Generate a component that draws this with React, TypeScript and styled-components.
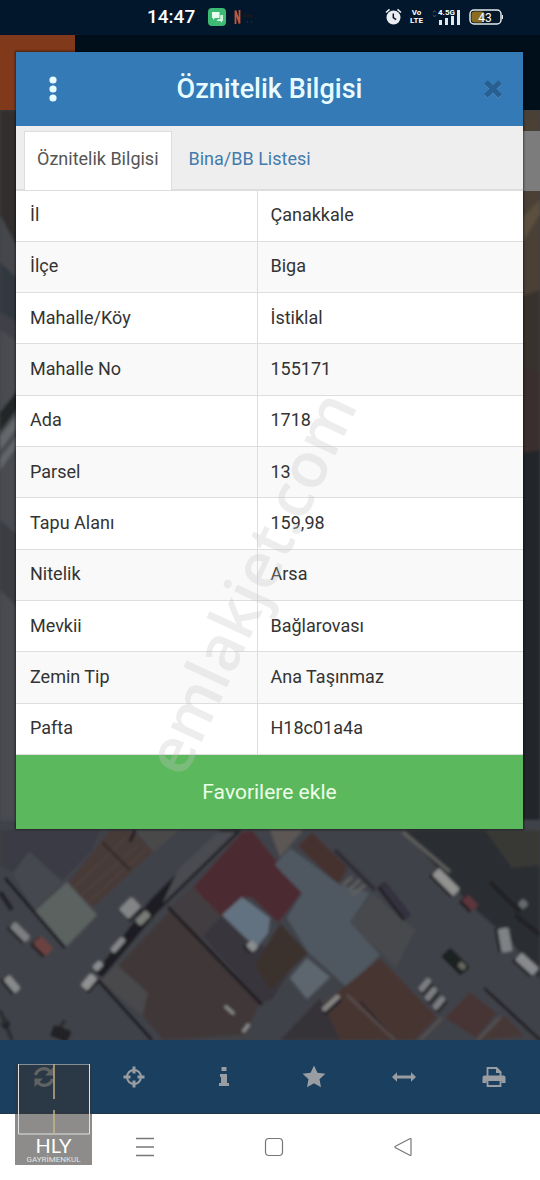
import React from "react";
import styled, { createGlobalStyle } from "styled-components";

const GlobalStyle = createGlobalStyle`
  *, *::before, *::after { box-sizing: border-box; }
  body {
    margin: 0;
    background: #fff;
    font-family: Roboto, "Liberation Sans", sans-serif;
    color: #333;
  }
  button { font: inherit; border: 0; padding: 0; background: none; cursor: pointer; }
`;

const Page = styled.div`
  display: flex;
  flex-direction: column;
  min-height: 100vh;
`;

/* ---------- status bar ---------- */

const StatusBar = styled.header`
  display: flex;
  align-items: center;
  justify-content: space-between;
  height: 35px;
  padding: 0 37px 2px 147px;
  background: #02172b;
  color: #fff;
`;

const StatusGroup = styled.div<{ $gap: number }>`
  display: flex;
  align-items: center;
  gap: ${(p) => p.$gap}px;
`;

const Clock = styled.time`
  margin-right: 5px;
  font-size: 19px;
  line-height: 24px;
  font-weight: 500;
`;

const VoLte = styled.span`
  font-size: 8px;
  line-height: 8px;
  font-weight: 700;
  text-align: center;
`;

/* ---------- app area ---------- */

const Stage = styled.main`
  display: grid;
  flex: 1;
  grid-template-columns: minmax(0, 1fr);
  background: #3d3d41;
`;

const Backdrop = styled.div`
  display: flex;
  flex-direction: column;
  grid-area: 1 / 1;
  min-height: 0;
`;

const AppBar = styled.div`
  height: 75px;
  background: #010f1a;
`;

const AppBarAccent = styled.div`
  width: 75px;
  height: 100%;
  background: #80391b;
`;

const MapBox = styled.div`
  position: relative;
  flex: 1;
  overflow: hidden;
`;

const MapDrawing = styled.svg`
  position: absolute;
  inset: 0;
  width: 100%;
  height: 100%;
`;

const MapControl = styled.div`
  position: absolute;
  top: 21px;
  right: 0;
  width: 60px;
  height: 60px;
  background: #7c7c7c;
`;

const Dialog = styled.section`
  position: relative;
  grid-area: 1 / 1;
  align-self: start;
  margin: 17px 17px 211px 16px;
  background: #fff;
  box-shadow: 0 0 2px 1px rgba(0, 0, 0, 0.45);
`;

const DialogHeader = styled.div`
  display: grid;
  grid-template-columns: 74px 1fr 74px;
  align-items: center;
  height: 74px;
  background: #337ab7;
`;

const Title = styled.h1`
  margin: 0;
  font-size: 27px;
  line-height: 32px;
  font-weight: 500;
  text-align: center;
  color: #e8fcff;
`;

const HeaderButton = styled.button<{ $end?: boolean }>`
  display: flex;
  align-items: center;
  justify-content: ${(p) => (p.$end ? "flex-end" : "center")};
  height: 74px;
  padding-right: ${(p) => (p.$end ? 20 : 0)}px;
`;

const Tabs = styled.div`
  display: flex;
  align-items: flex-end;
  height: 65px;
  padding: 5px 8px 0;
  background: #eee;
  border-bottom: 2px solid #ddd;
`;

const Tab = styled.button<{ $active?: boolean }>`
  height: 59px;
  padding: 0 12px 4px;
  margin-bottom: -1px;
  margin-right: 4px;
  border: 1px solid ${(p) => (p.$active ? "#ddd" : "transparent")};
  border-bottom: 0;
  background: ${(p) => (p.$active ? "#fff" : "transparent")};
  color: ${(p) => (p.$active ? "#555" : "#427bac")};
  font-size: 18px;
  line-height: 24px;
  white-space: nowrap;
`;

const Table = styled.table`
  width: 100%;
  height: 564px;
  table-layout: fixed;
  border-collapse: collapse;
  font-size: 18px;
  line-height: 24px;
`;

const Row = styled.tr`
  border-bottom: 1px solid #ddd;
  &:nth-child(even) { background: #f9f9f9; }
`;

const Name = styled.th`
  width: 241px;
  padding: 0 14px 1px;
  border-right: 1px solid #ddd;
  font-weight: 400;
  text-align: left;
`;

const Value = styled.td`
  padding: 0 13px 1px;
`;

const FavoriteButton = styled.button`
  display: block;
  width: 100%;
  height: 74px;
  background: #5cb85c;
  color: #ecffe8;
  font-size: 21px;
  line-height: 28px;
`;

const Watermark = styled.div`
  position: absolute;
  top: 530px;
  left: 233px;
  color: rgba(195, 195, 195, 0.3);
  font-family: "Open Sans", "Liberation Sans", sans-serif;
  font-size: 63px;
  line-height: 1;
  font-weight: 600;
  white-space: nowrap;
  transform: translate(-50%, -50%) rotate(-65deg);
  pointer-events: none;
`;

/* ---------- bottom bars ---------- */

const Bottom = styled.footer`
  position: relative;
`;

const Toolbar = styled.nav`
  display: grid;
  grid-template-columns: repeat(6, 1fr);
  height: 74px;
  background: #1b3f5f;
  border-bottom: 1px solid #24384a;
`;

const ToolButton = styled.button`
  display: flex;
  align-items: center;
  justify-content: center;
  padding-right: 3px;
  color: #9a9ea3;
`;

const SystemNav = styled.nav`
  display: flex;
  align-items: center;
  justify-content: space-between;
  height: 66px;
  padding: 0 122px 0 133px;
  background: #fff;
`;

const Agency = styled.div`
  position: absolute;
  top: 24px;
  left: 15px;
  display: flex;
  flex-direction: column;
  align-items: center;
  width: 77px;
  height: 101px;
  background: rgba(55, 52, 50, 0.57);
  color: #fff;
`;

const AgencyName = styled.span`
  font-family: Lato, sans-serif;
  font-size: 20px;
  line-height: 20px;
  font-weight: 400;
`;

const AgencyKind = styled.span`
  margin-top: 1px;
  font-size: 8px;
  line-height: 8px;
  color: #e4e4e4;
`;

/* ---------- drawings ---------- */

const AlarmIcon = () => (
  <svg width="17" height="17" viewBox="0 0 17 17" aria-hidden="true">
    <circle cx="8.5" cy="9.5" r="7" fill="#e9edf2" />
    <path d="M1 4.5 4.5 1.3M16 4.5 12.5 1.3" stroke="#e9edf2" strokeWidth="1.6" />
    <path d="M8.3 5.5v4.2l2.8 2" stroke="#02172b" strokeWidth="1.5" fill="none" />
  </svg>
);

const SignalIcon = () => (
  <svg width="30" height="18" viewBox="0 0 30 18" aria-hidden="true">
    <path d="M2 4.5 3.5 2.5 5 4.5M2 7 3.5 9 5 7" stroke="#44515f" fill="none" />
    <g fill="#e4e8ec">
      <rect x="8" y="12" width="3" height="5" />
      <rect x="14" y="10" width="3" height="7" />
      <rect x="20" y="8" width="3" height="9" />
      <rect x="26" y="2" width="3" height="15" />
    </g>
    <text x="7" y="7" fill="#fff" fontSize="8" fontWeight="700" fontFamily="Roboto, sans-serif">4.5G</text>
  </svg>
);

const BatteryIcon = () => (
  <svg width="34" height="16" viewBox="0 0 34 16" role="img" aria-label="43%">
    <rect x="2.5" y="2.5" width="13" height="11" rx="3" fill="#8c6d20" />
    <rect x="1" y="1" width="31" height="14" rx="4" fill="none" stroke="#e4e8ec" strokeWidth="1.5" />
    <path d="M33.4 6v4" stroke="#e4e8ec" strokeWidth="1.2" />
    <text x="16" y="12.5" textAnchor="middle" fill="#fff" fontSize="12" fontFamily="Roboto, sans-serif">43</text>
  </svg>
);

const ChatIcon = () => (
  <svg width="18" height="18" viewBox="0 0 18 18" aria-hidden="true">
    <rect width="18" height="18" rx="4" fill="#3dba74" />
    <path d="M4 4h7.5v6H7l-2 2v-2H4z" fill="#e8fff0" />
    <path d="M12.3 7H15v6h-1v1.8L12 13H8.5l1.7-2h2.1z" fill="#d2f7df" />
  </svg>
);

const LetterMark = () => (
  <svg width="20" height="16" viewBox="0 0 20 16" aria-hidden="true">
    <path d="M1.5 15V1.5L5.5 14.5V1" fill="none" stroke="#c4583c" strokeWidth="1.8" />
    <path d="M9 7h10" stroke="#161821" strokeWidth="3" />
    <path d="M13 13h1M17 13h1" stroke="#31465a" />
  </svg>
);

const DotsIcon = () => (
  <svg width="8" height="26" viewBox="0 0 8 26" aria-hidden="true" fill="#e8fcff">
    <circle cx="4" cy="4" r="3.6" /><circle cx="4" cy="13" r="3.6" /><circle cx="4" cy="22" r="3.6" />
  </svg>
);

const CloseIcon = () => (
  <svg width="20" height="20" viewBox="0 0 20 20" aria-hidden="true">
    <path d="M3 4 17 18M17 4 3 18" stroke="#4f8bbf" strokeWidth="5" />
    <path d="M3 3 17 17M17 3 3 17" stroke="#285f90" strokeWidth="5" />
  </svg>
);

const ToolIcon = ({ children }: { children: React.ReactNode }) => (
  <svg width="24" height="24" viewBox="0 0 24 24" aria-hidden="true" fill="currentColor">
    {children}
  </svg>
);

const RefreshIcon = () => (
  <ToolIcon>
    <path d="M3.5 10A8.5 8.5 0 0 1 18 6.5M20.5 14A8.5 8.5 0 0 1 6 17.5" fill="none" stroke="currentColor" strokeWidth="3.2" />
    <path d="M21.5 2v8.5H13zM2.5 22v-8.5H11z" />
  </ToolIcon>
);

const CrosshairIcon = () => (
  <ToolIcon>
    <circle cx="12" cy="12" r="7" fill="none" stroke="currentColor" strokeWidth="2" />
    <path d="M12 1.5v7M12 15.5v7M1.5 12h7M15.5 12h7" stroke="currentColor" strokeWidth="3" />
  </ToolIcon>
);

const InfoIcon = () => (
  <ToolIcon>
    <path d="M9.5 2h5v4h-5zM8 9h7v9h2v3H7v-3h2v-6H8z" />
  </ToolIcon>
);

const StarIcon = () => (
  <ToolIcon>
    <path d="m12 .5 3.4 7.3 8 1-5.9 5.5 1.5 7.9-7-3.9-7 3.9 1.5-7.9L.6 8.8l8-1z" />
  </ToolIcon>
);

const ResizeIcon = () => (
  <ToolIcon>
    <path d="M0 12 5 7.2v3.3h14V7.2L24 12l-5 4.8v-3.3H5v3.3z" />
  </ToolIcon>
);

const PrintIcon = () => (
  <ToolIcon>
    <path d="M5.5 12V3h9l4 4v5" fill="none" stroke="currentColor" strokeWidth="1.8" />
    <path d="M14 2.5h1L19.5 7v1H14z" />
    <path d="M2.5 10.5h19a2 2 0 0 1 2 2V18h-4v-2h-15v2h-4v-5.5a2 2 0 0 1 2-2z" />
    <path d="M5.5 16v5h13v-5" fill="none" stroke="currentColor" strokeWidth="1.8" />
  </ToolIcon>
);

const MenuLines = () => (
  <svg width="24" height="24" viewBox="0 0 24 24" aria-hidden="true">
    <path d="M3 3.5h18M3 12h18M3 20.5h18" stroke="#777" strokeWidth="1.3" />
  </svg>
);

const HomeSquare = () => (
  <svg width="24" height="24" viewBox="0 0 24 24" aria-hidden="true">
    <rect x="3.5" y="3.5" width="17" height="17" rx="3.5" fill="none" stroke="#777" strokeWidth="1.2" />
  </svg>
);

const BackTriangle = () => (
  <svg width="24" height="24" viewBox="0 0 24 24" aria-hidden="true">
    <path d="M20 4.3v15.4q0 1.2-1.2.6L4.5 12.8q-1.2-.8 0-1.6L18.8 3.7q1.2-.6 1.2.6z" fill="none" stroke="#777" strokeWidth="1.2" />
  </svg>
);

const LogoFrame = () => (
  <svg width="77" height="71" viewBox="0 0 77 71" aria-hidden="true">
    <path d="M3.5 0v70h71V0z" fill="none" stroke="#dfe2e4" strokeWidth="1" />
    <path d="M39 0v35M39 46v24" stroke="#cbb787" strokeWidth="1.4" />
  </svg>
);

const shapes: [string, string][] = [
  /* left edge */
  ["#302f2d", "0,110 30,110 30,255 0,240"],
  ["#45474b", "0,215 30,270 30,330 0,300"],
  ["#303741", "0,262 30,290 30,330 0,312"],
  ["#484c51", "0,330 30,350 30,860 0,860"],
  ["#232528", "0,412 30,375 30,392 0,432"],
  ["#65686a", "0,436 30,400 30,412 0,450"],
  ["#62666a", "0,458 30,420 30,428 0,470"],
  ["#3b3e43", "0,520 30,545 30,620 0,590"],
  /* right edge */
  ["#4b4036", "510,110 540,110 540,300 510,330"],
  ["#5c503f", "510,230 540,200 540,214 510,262"],
  ["#37332f", "510,300 540,290 540,375 510,360"],
  ["#3a2d2d", "510,360 540,372 540,480 510,470"],
  ["#20262a", "510,455 540,450 540,830 510,830"],
  /* streets and blocks below the dialog */
  ["#41434a", "0,820 540,820 540,1040 0,1040"],
  ["#3b3b45", "0,830 100,830 92,850 62,880 28,852 13,873 0,865"],
  ["#45494f", "13,873 30,852 62,882 34,910"],
  ["#463a38", "68,883 110,830 133,830 153,852 93,908"],
  ["#4a4848", "135,830 178,830 154,852"],
  ["#5c6261", "33,913 67,882 97,915 65,948"],
  ["#1f1c22", "220,830 242,830 156,914 102,978 96,972 150,900"],
  ["#4b2c32", "242,832 252,830 302,893 278,923 250,896 220,917 193,887"],
  ["#433c40", "170,906 193,887 220,915 200,937"],
  ["#38353c", "202,936 222,915 260,945 300,955 272,1000 262,1003"],
  ["#403737", "170,910 200,937 260,1003 245,1035 163,1040 143,1017 147,993 117,967"],
  ["#49484b", "100,980 117,965 148,993 142,1015"],
  ["#647280", "222,915 242,897 270,918 268,933 256,948"],
  ["#5b5755", "270,830 303,830 280,857"],
  ["#44302f", "298,846 312,832 348,868 338,885"],
  ["#505961", "290,848 340,885 370,893 350,922 380,955 347,987 308,952 287,918 302,893 275,865"],
  ["#47494d", "350,922 372,894 415,930 396,967"],
  ["#3b322f", "280,923 308,953 270,990 255,965"],
  ["#5d666e", "290,978 307,958 330,977 307,999"],
  ["#463433", "380,958 437,1017 415,1040 330,1040 308,1016"],
  ["#363237", "280,1040 320,998 340,1040"],
  ["#463635", "445,1018 470,992 497,1013 476,1038"],
  ["#473837", "480,1040 505,1015 525,1036"],
  ["#2b2f31", "402,830 540,830 540,980 510,940 470,905 430,860"],
  ["#383736", "485,830 540,830 540,865 512,868"],
  ["#4a4b51", "178,870 218,832 236,832 162,904"],
];

const strokes: [string, number, string][] = [
  ["#19181c", 3, "M5 878 65 948M98 980 152 1040M168 907 262 1005"],
  ["#1d1a1e", 3, "M484 988 540 1040M130 842 135 830"],
  ["#5b4a45", 1, "M75 887 125 838M82 895 137 846M88 902 146 850"],
  ["#2c2225", 2, "M102 842 130 870M360 1002 395 1040"],
  ["#5c5350", 2, "M347 995 395 1040M420 1040 442 1018M478 1040 500 1017"],
  ["#61615f", 3, "M403 832 450 872M343 885 352 877M349 890 360 880M352 895 365 885"],
  ["#2c2b30", 4, "M0 1010 12 1040M55 1036 65 1020M335 850 375 890"],
  ["#8d9092", 3, "M225 1006 234 1014M243 1032 249 1024"],
  ["#222426", 5, "M0 892 12 910M490 882 520 912M515 915 540 935"],
];

/* x, y, length, width, angle, colour */
const cars: [number, number, number, number, number, string][] = [
  [20, 932, 22, 8, 45, "#7d7e82"], [43, 946, 18, 11, 45, "#6c4340"], [12, 984, 18, 8, 50, "#88898a"],
  [130, 908, 18, 14, -45, "#838486"], [143, 918, 15, 8, -45, "#787b77"], [118, 945, 18, 6, -48, "#85878a"],
  [98, 966, 10, 7, -45, "#8b8d90"], [89, 982, 16, 9, -50, "#909193"], [396, 901, 42, 8, 52, "#35333f"],
  [446, 882, 30, 10, 45, "#929291"], [470, 903, 15, 9, 45, "#5d363c"], [505, 940, 24, 11, 80, "#7f8284"],
  [527, 964, 24, 10, 42, "#888a8d"], [457, 961, 27, 10, 45, "#1f2024"], [462, 966, 8, 6, 45, "#65675f"],
  [425, 985, 15, 6, -50, "#7c7e81"], [431, 994, 15, 6, -50, "#7c7e81"], [439, 1003, 15, 6, -50, "#7c7e81"],
  [331, 1003, 22, 5, -42, "#858483"], [252, 946, 10, 8, 45, "#8a8d8e"], [523, 904, 8, 8, 45, "#666a6d"],
  [5, 1022, 8, 5, -40, "#2b2d30"], [62, 1032, 18, 9, 20, "#242428"],
];

const AerialMap = () => (
  <MapDrawing viewBox="0 110 540 930" preserveAspectRatio="xMidYMax slice" aria-hidden="true">
    <defs>
      <filter id="soft" x="0" y="0" width="100%" height="100%">
        <feGaussianBlur stdDeviation="1.5" />
      </filter>
    </defs>
    <rect x="0" y="110" width="540" height="930" fill="#404147" />
    <g filter="url(#soft)">
      {shapes.map(([fill, points]) => <polygon key={points} fill={fill} points={points} />)}
      {strokes.map(([stroke, width, d]) => (
        <path key={d} d={d} fill="none" stroke={stroke} strokeWidth={width} />
      ))}
      {cars.map(([x, y, length, width, angle, fill]) => (
        <g key={`${x}-${y}`} transform={`translate(${x} ${y}) rotate(${angle})`}>
          <rect x={-length / 2 - 1} y={-width / 2 + 1} width={length} height={width + 2} fill="#1c1d20" />
          <rect x={-length / 2} y={-width / 2} width={length} height={width} rx="2" fill={fill} />
        </g>
      ))}
    </g>
  </MapDrawing>
);

/* ---------- data ---------- */

const attributes = [
  ["İl", "Çanakkale"],
  ["İlçe", "Biga"],
  ["Mahalle/Köy", "İstiklal"],
  ["Mahalle No", "155171"],
  ["Ada", "1718"],
  ["Parsel", "13"],
  ["Tapu Alanı", "159,98"],
  ["Nitelik", "Arsa"],
  ["Mevkii", "Bağlarovası"],
  ["Zemin Tip", "Ana Taşınmaz"],
  ["Pafta", "H18c01a4a"],
];

const tools = [
  { label: "Yenile", Icon: RefreshIcon },
  { label: "Konum", Icon: CrosshairIcon },
  { label: "Bilgi", Icon: InfoIcon },
  { label: "Favoriler", Icon: StarIcon },
  { label: "Ölç", Icon: ResizeIcon },
  { label: "Yazdır", Icon: PrintIcon },
];

export default function App() {
  return (
    <Page>
      <GlobalStyle />
      <StatusBar>
        <StatusGroup $gap={8}>
          <Clock>14:47</Clock>
          <ChatIcon />
          <LetterMark />
        </StatusGroup>
        <StatusGroup $gap={8}>
          <AlarmIcon />
          <VoLte>Vo<br />LTE</VoLte>
          <SignalIcon />
          <BatteryIcon />
        </StatusGroup>
      </StatusBar>

      <Stage>
        <Backdrop>
          <AppBar><AppBarAccent /></AppBar>
          <MapBox>
            <AerialMap />
            <MapControl />
          </MapBox>
        </Backdrop>

        <Dialog role="dialog" aria-labelledby="dialog-title">
          <DialogHeader>
            <HeaderButton aria-label="Menü"><DotsIcon /></HeaderButton>
            <Title id="dialog-title">Öznitelik Bilgisi</Title>
            <HeaderButton $end aria-label="Kapat"><CloseIcon /></HeaderButton>
          </DialogHeader>
          <Tabs role="tablist">
            <Tab role="tab" aria-selected="true" $active>Öznitelik Bilgisi</Tab>
            <Tab role="tab" aria-selected="false">Bina/BB Listesi</Tab>
          </Tabs>
          <Table>
            <tbody>
              {attributes.map(([name, value]) => (
                <Row key={name}>
                  <Name scope="row">{name}</Name>
                  <Value>{value}</Value>
                </Row>
              ))}
            </tbody>
          </Table>
          <FavoriteButton>Favorilere ekle</FavoriteButton>
          <Watermark>emlakjet.com</Watermark>
        </Dialog>
      </Stage>

      <Bottom>
        <Toolbar>
          {tools.map(({ label, Icon }) => (
            <ToolButton key={label} aria-label={label}><Icon /></ToolButton>
          ))}
        </Toolbar>
        <SystemNav>
          <ToolButton aria-label="Son uygulamalar"><MenuLines /></ToolButton>
          <ToolButton aria-label="Ana ekran"><HomeSquare /></ToolButton>
          <ToolButton aria-label="Geri"><BackTriangle /></ToolButton>
        </SystemNav>
        <Agency>
          <LogoFrame />
          <AgencyName>HLY</AgencyName>
          <AgencyKind>GAYRİMENKUL</AgencyKind>
        </Agency>
      </Bottom>
    </Page>
  );
}
